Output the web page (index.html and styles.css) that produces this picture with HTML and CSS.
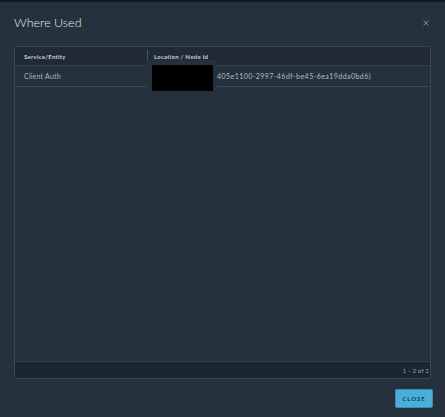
FILE: index.html
```html
<!DOCTYPE html>
<html lang="en">
<head>
    <meta charset="UTF-8">
    <title>Where Used</title>
    <link rel="stylesheet" href="styles.css">
</head>
<body>
    <div class="topbar"></div>
    <div class="modal">
        <div class="modal-header">
            <h3 class="modal-title">Where Used</h3>
            <button class="close-x" aria-label="Close">
                <svg width="6" height="6" viewBox="0 0 6 6"><path d="M0.5 0.5 L5.5 5.5 M5.5 0.5 L0.5 5.5" stroke="#7d8891" stroke-width="1"/></svg>
            </button>
        </div>

        <div class="datagrid">
            <div class="dg-head">
                <div class="dg-cell col-service">Service/Entity</div>
                <div class="dg-cell col-location">Location / Node Id</div>
            </div>
            <div class="dg-body">
                <div class="dg-row">
                    <div class="dg-cell col-service">Client Auth</div>
                    <div class="dg-cell col-location">
                        <span class="node-id">405e1100-2997-46df-be45-6ea19dda0bd6)</span>
                    </div>
                </div>
                <div class="redact"><div class="redact-box"></div></div>
            </div>
            <div class="dg-foot">1 - 2 of 2</div>
        </div>

        <div class="modal-footer">
            <button class="btn-close">Close</button>
        </div>
    </div>
</body>
</html>
```

FILE: styles.css
```css
body {
    margin: 0;
    height: 417px;
    background: #25313d;
    font-family: Lato, "Noto Sans", sans-serif;
    color: #acb5bd;
    display: flex;
    flex-direction: column;
    overflow: hidden;
}

.topbar {
    height: 2px;
    background: #15191e;
}

.modal {
    flex: 1;
    display: flex;
    flex-direction: column;
    padding: 0 12px 0 14px;
}

.modal-header {
    display: flex;
    align-items: center;
    justify-content: space-between;
    height: 44px;
}

.modal-title {
    margin: 0 0 4px;
    font-size: 12.5px;
    font-weight: 300;
    color: #e9ecef;
}

.close-x {
    border: none;
    background: none;
    padding: 0;
    margin: 0 4px 3px 0;
    display: flex;
    cursor: pointer;
}

.datagrid {
    height: 331px;
    margin-right: 2px;
    border: 1px solid #3a4753;
    border-radius: 2px;
    display: flex;
    flex-direction: column;
}

.dg-head {
    display: flex;
    height: 18px;
    background: #1f2a35;
    border-bottom: 1px solid #34414d;
}

.dg-head .dg-cell {
    font-size: 6px;
    font-weight: 700;
    color: #c9d0d6;
    letter-spacing: 0.25px;
}

.dg-head .col-location {
    border-left: 1px solid #4a5763;
    height: 12px;
    align-self: center;
}

.dg-cell {
    display: flex;
    align-items: center;
    padding-left: 9px;
    font-size: 7px;
    letter-spacing: 0.2px;
}

.col-service {
    width: 123px;
}

.col-location {
    flex: 1;
    padding-left: 6px;
}

.dg-body {
    flex: 1;
    position: relative;
}

.dg-row {
    display: flex;
    height: 20px;
    border-bottom: 1px solid #3e4b57;
    margin: 0 1px;
}

.dg-row .col-service {
    padding-left: 8px;
}

.node-id {
    padding-left: 64px;
    color: #b5bec6;
    letter-spacing: 0.45px;
}

.redact {
    position: absolute;
    left: 132px;
    top: -6px;
    width: 60px;
    height: 26px;
    padding: 5px;
    background: #25313d;
}

.redact-box {
    width: 61px;
    height: 26px;
    background: #000;
}

.dg-foot {
    height: 16px;
    background: #1c2630;
    border-top: 1px solid #34414d;
    display: flex;
    align-items: center;
    justify-content: flex-end;
    padding-right: 1px;
    font-size: 6px;
    letter-spacing: 0.2px;
    color: #9aa4ad;
}

.modal-footer {
    display: flex;
    justify-content: flex-end;
    padding-top: 10px;
}

.btn-close {
    width: 38px;
    height: 19px;
    padding: 0;
    border: 1px solid #3d8ab3;
    border-radius: 2px;
    background: #49afd9;
    color: #1d3d55;
    font-family: Lato, "Noto Sans", sans-serif;
    font-size: 6px;
    font-weight: 700;
    letter-spacing: 1px;
    text-transform: uppercase;
    cursor: pointer;
}
```
